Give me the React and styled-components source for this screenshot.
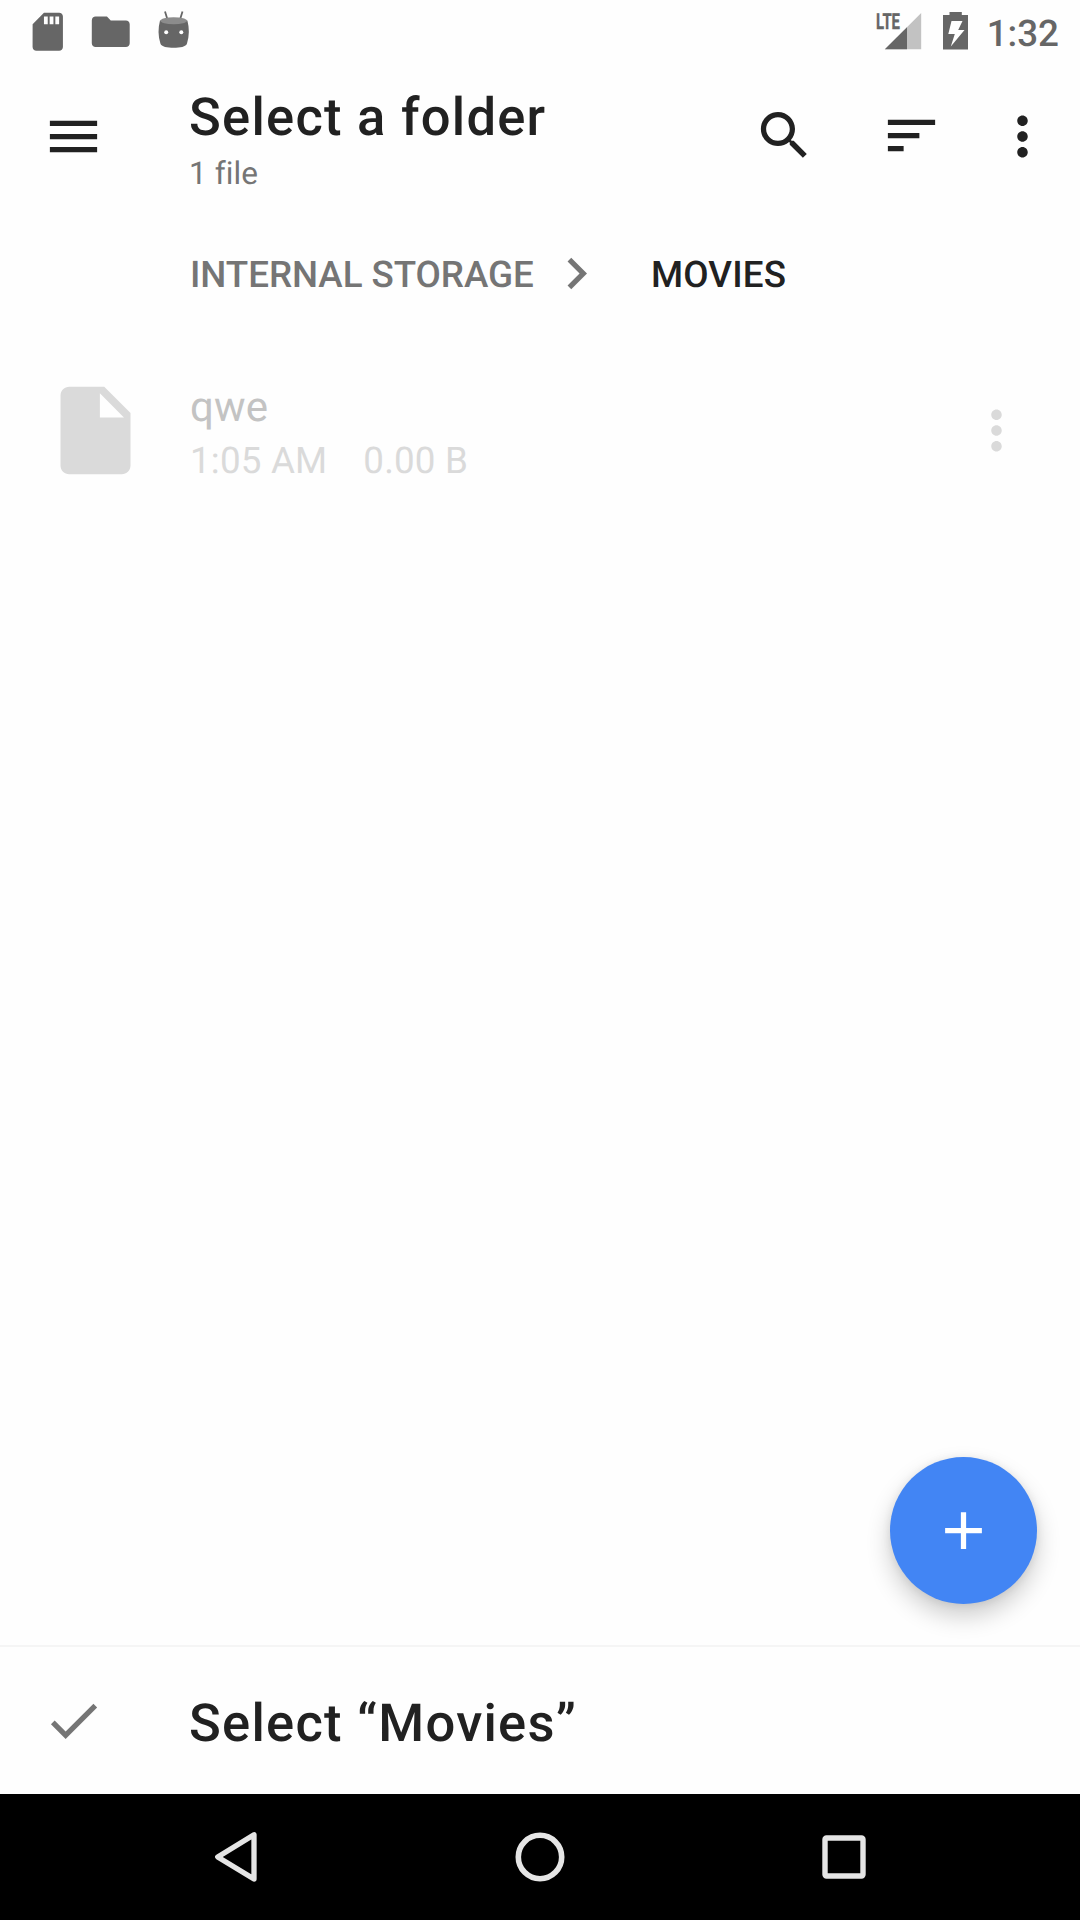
import React from "react";
import styled, { createGlobalStyle } from "styled-components";

const Global = createGlobalStyle`
  *, *::before, *::after { box-sizing: border-box; }
  body { margin: 0; background: #fefefe; }
  button { border: 0; padding: 0; margin: 0; background: none; font: inherit; color: inherit; }
`;

const Screen = styled.div`
  display: flex;
  flex-direction: column;
  width: 1080px;
  height: 1920px;
  overflow: hidden;
  background: #fefefe;
  color: #212121;
  font-family: Roboto, "Liberation Sans", sans-serif;
  text-rendering: geometricPrecision;
`;

const StatusBar = styled.header`
  display: flex;
  justify-content: space-between;
  height: 63px;
  padding: 0 21px 0 24.5px;
  color: #666;
`;

const Notifications = styled.div`
  display: flex;
  align-items: center;
  gap: 17.5px;
`;

const SystemIcons = styled.div`
  display: flex;
  align-items: flex-start;
`;

const Clock = styled.span`
  width: 73px;
  margin-left: 18px;
  padding-top: 12px;
  font-size: 36.75px;
  line-height: 44px;
  font-weight: 500;
  text-align: right;
  white-space: nowrap;
`;

const Glyph = styled.svg`
  display: block;
  flex: none;
  width: ${(p) => p.$w || 63}px;
  height: ${(p) => p.$h || p.$w || 63}px;
  fill: currentColor;
`;

const BatteryGlyph = styled(Glyph)`
  margin-left: 21px;
`;

const Toolbar = styled.div`
  display: flex;
  align-items: center;
  height: 147px;
  padding: 0 26px 0 42px;
`;

const IconButton = styled.button`
  display: flex;
  flex: none;
  color: ${(p) => p.$color || "inherit"};
`;

const Heading = styled.div`
  flex: 1;
  align-self: flex-start;
  margin-left: 84px;
  padding-top: 24px;
`;

const Title = styled.h1`
  margin: 0;
  font-size: 52.5px;
  line-height: 60px;
  font-weight: 500;
  letter-spacing: 1.25px;
  white-space: nowrap;
`;

const Subtitle = styled.div`
  margin-top: 9px;
  font-size: 31.5px;
  line-height: 36px;
  letter-spacing: 0.1px;
  color: #757575;
`;

const Actions = styled.div`
  display: flex;
  align-items: center;
`;

const Action = styled(IconButton)`
  margin-left: ${(p) => p.$gap}px;
  padding-bottom: ${(p) => p.$lift || 0}px;
`;

const Breadcrumbs = styled.nav`
  display: flex;
  align-items: center;
  height: 126px;
  padding-left: 190px;
`;

const Crumb = styled.span`
  padding-top: 4px;
  width: ${(p) => p.$w}px;
  font-size: 36.75px;
  line-height: 44px;
  font-weight: 500;
  letter-spacing: ${(p) => (p.$current ? 0.15 : -0.05)}px;
  white-space: nowrap;
  color: ${(p) => (p.$current ? "#212121" : "#757575")};
`;

const Separator = styled.span`
  display: flex;
  color: #757575;
  margin-right: 43px;
`;

const FileList = styled.main`
  position: relative;
  flex: 1;
`;

const FileRow = styled.div`
  display: flex;
  align-items: center;
  height: 189px;
  padding: 0 52px 0 43px;
  color: #dadada;
`;

const FileText = styled.div`
  flex: 1;
  align-self: flex-start;
  margin-left: 42px;
  padding-top: 47px;
`;

const FileName = styled.div`
  font-size: 42px;
  line-height: 50px;
  letter-spacing: 0.2px;
  color: #c3c3c3;
`;

const FileMeta = styled.div`
  display: flex;
  gap: 36px;
  margin-top: 6px;
  font-size: 36.75px;
  line-height: 44px;
  letter-spacing: 0.18px;
`;

const AddButton = styled.button`
  position: absolute;
  right: 43px;
  bottom: 41px;
  display: flex;
  align-items: center;
  justify-content: center;
  width: 147px;
  height: 147px;
  border-radius: 50%;
  color: #fff;
  background: #4285f4;
  box-shadow: 0 12px 24px rgba(0, 0, 0, 0.2), 0 1px 8px rgba(0, 0, 0, 0.08);
`;

const SelectBar = styled.footer`
  display: flex;
  align-items: center;
  height: 149px;
  padding: 0 0 1px 42px;
  border-top: 2px solid #f5f5f5;
`;

const SelectLabel = styled(Title).attrs({ as: "span" })`
  margin-left: 84px;
  padding-top: 5px;
`;

const NavBar = styled.div`
  display: flex;
  align-items: center;
  justify-content: center;
  gap: 240px;
  height: 126px;
  padding: 0 1px 1px 0;
  color: #e5e5e5;
  background: #000;
`;

const MORE =
  "M12 8c1.1 0 2-.9 2-2s-.9-2-2-2-2 .9-2 2 .9 2 2 2zm0 2c-1.1 0-2 .9-2 2s.9 2 2 2 2-.9 2-2-.9-2-2-2zm0 6c-1.1 0-2 .9-2 2s.9 2 2 2 2-.9 2-2-.9-2-2-2z";

const Icon = ({ d, size }) => (
  <Glyph $w={size} viewBox="0 0 24 24" aria-hidden="true">
    <path d={d} />
  </Glyph>
);

const BugdroidIcon = () => (
  <Glyph $w={45.5} viewBox="0 0 45.5 45.5" aria-hidden="true">
    <path d="M14 2.5l2.3 7.5M31.5 2.5l-2.3 7.5" stroke="#666" strokeWidth="1.8" fill="none" />
    <path d="M9 11.5C7 19 7 27 9.4 34.5c1 3.4 7 4.3 13.3 4.3s12.3-.9 13.3-4.3C38.4 27 38.4 19 36.4 11.5z" />
    <ellipse cx="22.7" cy="11.7" rx="13.3" ry="3.5" fill="#8c8c8c" />
    <circle cx="15.2" cy="23.3" r="2" fill="#fff" />
    <circle cx="30.3" cy="23.3" r="2" fill="#fff" />
  </Glyph>
);

const SignalIcon = () => (
  <Glyph $w={46} $h={63} viewBox="876 0 46 63">
    <path d="M921.2 13v36.3H885z" fill="#c2c2c2" />
    <path d="M907 27.2v22.1h-22.2z" />
    <text
      x="876"
      y="29"
      fontSize="22"
      fontWeight="700"
      stroke="currentColor"
      strokeWidth="0.4"
      textLength="24"
      lengthAdjust="spacingAndGlyphs"
    >
      LTE
    </text>
  </Glyph>
);

const BatteryIcon = () => (
  <BatteryGlyph $w={25} $h={63} viewBox="943 0 25 63">
    <path d="M949.5 12h12.3v3H968v34.5h-25V15h6.5z" />
    <path d="M951.5 21h11l-4.3 9h6.3l-13.7 16.5 4-12.5h-6.5z" fill="#fff" />
  </BatteryGlyph>
);

export default function App() {
  return (
    <Screen>
      <Global />
      <StatusBar>
        <Notifications>
          <Icon
            size={45.5}
            d="M18 2h-8L4.02 8 4 20c0 1.1.9 2 2 2h12c1.1 0 2-.9 2-2V4c0-1.1-.9-2-2-2zm-6 6h-2V4h2v4zm3 0h-2V4h2v4zm3 0h-2V4h2v4z"
          />
          <Icon
            size={45.5}
            d="M10 4H4c-1.1 0-1.99.9-1.99 2L2 18c0 1.1.9 2 2 2h16c1.1 0 2-.9 2-2V8c0-1.1-.9-2-2-2h-8l-2-2z"
          />
          <BugdroidIcon />
        </Notifications>
        <SystemIcons>
          <SignalIcon />
          <BatteryIcon />
          <Clock>1:32</Clock>
        </SystemIcons>
      </StatusBar>

      <Toolbar>
        <IconButton aria-label="Menu">
          <Icon d="M3 18h18v-2H3v2zm0-5h18v-2H3v2zm0-7v2h18V6H3z" />
        </IconButton>
        <Heading>
          <Title>Select a folder</Title>
          <Subtitle>1 file</Subtitle>
        </Heading>
        <Actions>
          <Action $gap={0} $lift={2} aria-label="Search">
            <Icon d="M15.5 14h-.79l-.28-.27C15.41 12.59 16 11.11 16 9.5 16 5.91 13.09 3 9.5 3S3 5.91 3 9.5 5.91 16 9.5 16c1.61 0 3.09-.59 4.23-1.57l.27.28v.79l5 4.99L20.49 19l-4.99-5zm-6 0C7.01 14 5 11.99 5 9.5S7.01 5 9.5 5 14 7.01 14 9.5 11.99 14 9.5 14z" />
          </Action>
          <Action $gap={64} $lift={2} aria-label="Sort">
            <Icon d="M3 18h6v-2H3v2zM3 6v2h18V6H3zm0 7h12v-2H3v2z" />
          </Action>
          <Action $gap={48} aria-label="More options">
            <Icon d={MORE} />
          </Action>
        </Actions>
      </Toolbar>

      <Breadcrumbs>
        <Crumb $w={355}>INTERNAL STORAGE</Crumb>
        <Separator>
          <Icon d="M10 6L8.59 7.41 13.17 12l-4.58 4.59L10 18l6-6z" />
        </Separator>
        <Crumb $current>MOVIES</Crumb>
      </Breadcrumbs>

      <FileList>
        <FileRow>
          <Icon
            size={105}
            d="M6 2c-1.1 0-1.99.9-1.99 2L4 20c0 1.1.89 2 1.99 2H18c1.1 0 2-.9 2-2V8l-6-6H6zm7 7V3.5L18.5 9H13z"
          />
          <FileText>
            <FileName>qwe</FileName>
            <FileMeta>
              <span>1:05 AM</span>
              <span>0.00 B</span>
            </FileMeta>
          </FileText>
          <IconButton aria-label="File options">
            <Icon d={MORE} />
          </IconButton>
        </FileRow>
        <AddButton aria-label="Create">
          <Icon d="M19 13h-6v6h-2v-6H5v-2h6V5h2v6h6v2z" />
        </AddButton>
      </FileList>

      <SelectBar>
        <IconButton $color="#757575" aria-label="Confirm">
          <Icon d="M9 16.17L4.83 12l-1.42 1.41L9 19 21 7l-1.41-1.41z" />
        </IconButton>
        <SelectLabel>Select “Movies”</SelectLabel>
      </SelectBar>

      <NavBar>
        <IconButton aria-label="Back">
          <Glyph viewBox="205.3 1825.3 63 63">
            <path
              d="M218 1857.2L254.3 1835v44.3z"
              fill="none"
              stroke="currentColor"
              strokeWidth="5.3"
              strokeLinejoin="round"
            />
          </Glyph>
        </IconButton>
        <IconButton aria-label="Home">
          <Glyph viewBox="0 0 63 63">
            <circle cx="32" cy="32" r="21.7" fill="none" stroke="currentColor" strokeWidth="5.6" />
          </Glyph>
        </IconButton>
        <IconButton aria-label="Recent apps">
          <Glyph viewBox="0 0 63 63">
            <rect
              x="14"
              y="13"
              width="38"
              height="38"
              rx="1.5"
              fill="none"
              stroke="currentColor"
              strokeWidth="5.4"
            />
          </Glyph>
        </IconButton>
      </NavBar>
    </Screen>
  );
}
